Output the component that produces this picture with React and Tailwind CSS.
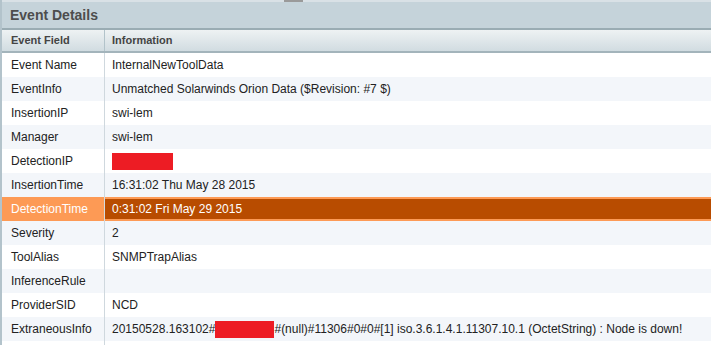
const rows = [
  { field: "Event Name", info: "InternalNewToolData" },
  { field: "EventInfo", info: "Unmatched Solarwinds Orion Data ($Revision: #7 $)" },
  { field: "InsertionIP", info: "swi-lem" },
  { field: "Manager", info: "swi-lem" },
  { field: "DetectionIP", redacted: true },
  { field: "InsertionTime", info: "16:31:02 Thu May 28 2015" },
  { field: "DetectionTime", info: "0:31:02 Fri May 29 2015", selected: true },
  { field: "Severity", info: "2" },
  { field: "ToolAlias", info: "SNMPTrapAlias" },
  { field: "InferenceRule", info: "" },
  { field: "ProviderSID", info: "NCD" },
  { field: "ExtraneousInfo", extraneous: true },
];

function Redact({ w }) {
  return <span className={`inline-block h-[17px] bg-[#ed1c24] align-middle ${w}`} />;
}

function Row({ row, index }) {
  const stripe = index % 2 === 1 ? "bg-[#f3f6fa]" : "bg-white";

  if (row.selected) {
    return (
      <div className="flex h-[24px] shrink-0 bg-[#fd9a55] text-white">
        <div className="flex w-[102px] shrink-0 items-center pl-[9px]">{row.field}</div>
        <div className="w-px bg-[#d2dbe0]" />
        <div className="my-[2px] flex flex-1 items-center bg-[#b84c00] pl-[7px]">{row.info}</div>
      </div>
    );
  }

  return (
    <div className={`flex h-[24px] shrink-0 ${stripe}`}>
      <div className="flex w-[102px] shrink-0 items-center pl-[9px]">{row.field}</div>
      <div className="w-px bg-[#cfd8de]" />
      <div className="flex flex-1 items-center whitespace-nowrap pl-[7px]">
        {row.redacted && <Redact w="w-[61px]" />}
        {row.extraneous && (
          <>
            <span>20150528.163102#</span>
            <Redact w="w-[59px]" />
            <span>#(null)#11306#0#0#[1] iso.3.6.1.4.1.11307.10.1 (OctetString) : Node is down!</span>
          </>
        )}
        {row.info}
      </div>
    </div>
  );
}

export default function App() {
  return (
    <div
      className="h-[345px] w-[711px] overflow-hidden bg-white text-[12px] text-[#222]"
      style={{ fontFamily: '"Liberation Sans", Arial, sans-serif' }}
    >
      <div className="flex h-full border-l-2 border-[#b3c3cb]">
        <div className="flex flex-1 flex-col">
          {/* top strip */}
          <div className="flex h-[2px] shrink-0 bg-[#d9e1e6]">
            <div className="ml-[282px] h-full w-[19px] bg-[#9a9a9a]" />
          </div>

          {/* Title */}
          <div className="flex h-[28px] shrink-0 items-center border-b-2 border-[#9aacb3] bg-[#c5d3da] pl-[8px] text-[14px] font-bold text-[#4d4d4d]">
            Event Details
          </div>

          {/* Header */}
          <div className="flex h-[23px] shrink-0 border-b-2 border-[#a3b4bb] bg-gradient-to-b from-[#eef2f3] to-[#d1dce1] text-[11px] font-bold text-[#444]">
            <div className="flex w-[102px] shrink-0 items-center pl-[9px]">Event Field</div>
            <div className="w-px bg-[#b2c3ca]" />
            <div className="flex flex-1 items-center pl-[7px]">Information</div>
          </div>

          {/* Rows */}
          {rows.map((row, i) => (
            <Row key={row.field} row={row} index={i} />
          ))}
          <div className="flex h-[24px] shrink-0 bg-white">
            <div className="w-[102px] shrink-0" />
            <div className="w-px bg-[#cfd8de]" />
          </div>
        </div>
      </div>
    </div>
  );
}
